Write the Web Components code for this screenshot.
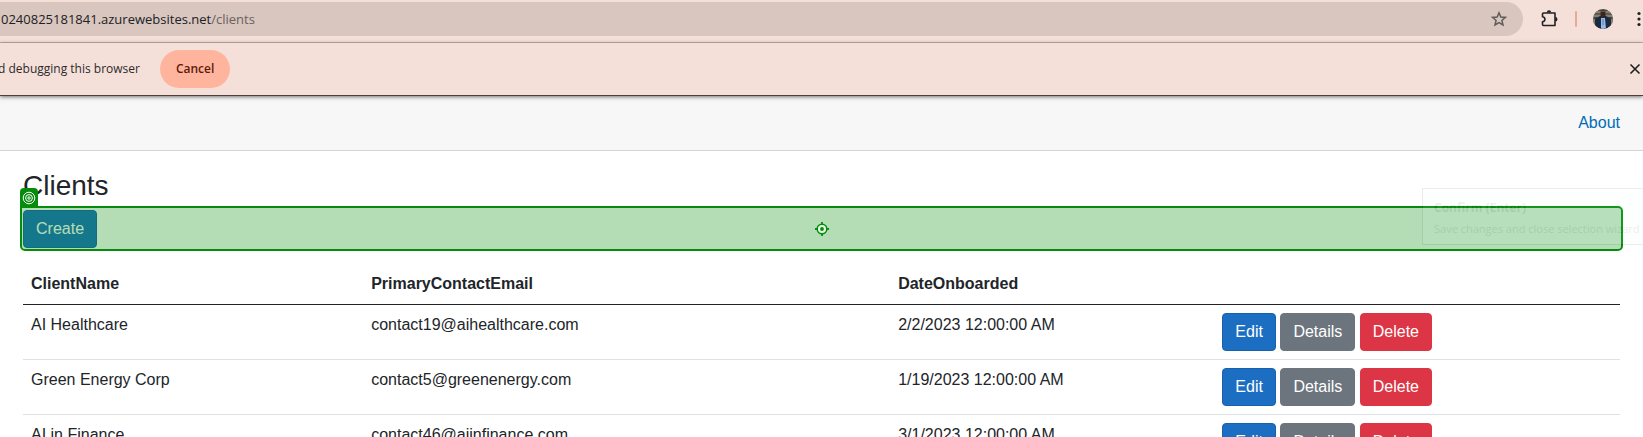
<!DOCTYPE html>
<html lang="en">
<head>
<meta charset="utf-8">
<title>Clients</title>
<style>
  html, body { margin: 0; height: 100%; }
  body { overflow: hidden; background: #fff; color: #212529; font: 16px/24px "Liberation Sans", Arial, sans-serif; }
</style>
</head>
<body>
<browser-toolbar><span slot="host">0240825181841.azurewebsites.net</span><span slot="path">/clients</span></browser-toolbar>
<info-bar>d debugging this browser<span slot="action">Cancel</span></info-bar>
<top-row><span>About</span></top-row>
<clients-page>
  <span slot="title">Clients</span>
  <selection-highlight slot="create"><action-button kind="primary">Create</action-button></selection-highlight>
  <client-table slot="table"></client-table>
</clients-page>
<script>
const define = (name, html, setup) => customElements.define(name, class extends HTMLElement {
  constructor() {
    super();
    this.attachShadow({ mode: 'open' }).innerHTML = html;
    if (setup) setup(this.shadowRoot, this);
  }
});

define('browser-toolbar', `
<style>
  :host { display: flex; align-items: center; gap: 16px; height: 38px; padding: 0 2px 4px 0; background: #f5e0d9; border-bottom: 1px solid #c9b0a9; font: 13px/20px "Open Sans", "Noto Sans", sans-serif; }
  .omnibox { flex: 1; display: flex; align-items: center; height: 34px; border-radius: 0 17px 17px 0; background: #d8c6bf; color: #202124; }
  .url { flex: 1; outline: 0; padding-left: 1px; }
  .path { color: #6a615e; }
  button { display: flex; border: 0; padding: 0; background: none; color: #202124; }
  .star { margin-right: 14px; color: #5f5b5a; }
  .line { width: 2px; height: 16px; background: #e8a996; border-radius: 1px; }
  .menu { margin-left: 8px; }
</style>
<div class="omnibox">
  <div class="url" role="textbox" aria-label="Address" contenteditable="true" spellcheck="false"><slot name="host"></slot><span class="path"><slot name="path"></slot></span></div>
  <button class="star" aria-label="Bookmark"><svg width="20" height="20" viewBox="0 0 20 20" fill="none" stroke="currentColor" stroke-width="1.5"><path d="M10 3.8 11.8 8l4.6.4-3.5 3 1.1 4.5-4-2.4-4 2.4 1.1-4.5-3.5-3L8.2 8z"/></svg></button>
</div>
<button aria-label="Extensions"><svg width="20" height="20" viewBox="0 0 20 20"><path d="M4.500 4H16v12.500H4.500a1 1 0 0 1-1-1v-2.700c3.200-.6 3.200-4.500 0-5.100V5a1 1 0 0 1 1-1z" fill="none" stroke="currentColor" stroke-width="1.6" stroke-linejoin="round"/><path d="M7.800 3.500a2.200 2.200 0 0 1 4.400 0zM16.300 8v4.400a2.200 2.200 0 0 0 0-4.400z" fill="currentColor"/></svg></button>
<span class="line"></span>
<button aria-label="Profile"><svg width="20" height="20" viewBox="0 0 20 20"><defs><clipPath id="c"><circle cx="10" cy="10" r="10"/></clipPath></defs><g clip-path="url(#c)"><path fill="#3c4850" d="M0 0h20v20H0z"/><path d="M0 3h20M0 7h20" stroke="#b68b60" stroke-width="1.500"/><path d="M0 5h20" stroke="#607786"/><path fill="#182b40" d="M2 20V10l5-3h6l5 3v10z"/><path fill="#98b8e8" d="M8 20V9h4l1 11z"/><path fill="#5f7fae" d="M9.500 10h1v6h-1z"/><path fill="#3a261e" d="M7.500 2.500h5v5L10 9 7.500 7.500z"/><path fill="#9a7b64" d="M0 10h2v7H0zM18 10h2v7h-2z"/></g></svg></button>
<button class="menu" aria-label="Menu"><svg width="4" height="16" viewBox="0 0 4 16" fill="currentColor"><circle cx="2" cy="2.500" r="1.600"/><circle cx="2" cy="8" r="1.600"/><circle cx="2" cy="13.500" r="1.600"/></svg></button>
`);

define('info-bar', `
<style>
  :host { display: flex; align-items: center; height: 52px; padding-right: 2px; background: #f5e0d9; color: #2b2b2b; border-bottom: 1px solid #50403b; box-shadow: 0 1px 4px #0008; position: relative; font: 12px/20px "Open Sans", "Noto Sans", sans-serif; }
  .text { margin-left: -2px; }
  .cancel { margin-left: 20px; height: 38px; padding: 0 16px; border: 0; border-radius: 19px; background: #ffb59d; color: #5c1a08; font: inherit; font-weight: 600; }
  .close { display: flex; margin-left: auto; padding: 0; border: 0; background: none; color: #202124; }
</style>
<span class="text"><slot></slot></span>
<button class="cancel"><slot name="action"></slot></button>
<button class="close" aria-label="Close"><svg width="12" height="12" viewBox="0 0 12 12" stroke="currentColor" stroke-width="1.600"><path d="m1.500 1.500 9 9m0-9-9 9"/></svg></button>
`);

define('top-row', `
<style>
  :host { display: flex; align-items: center; justify-content: flex-end; height: 54px; padding-right: 23px; background: #f7f7f7; border-bottom: 1px solid #d6d5d5; }
  a { color: #006bb7; text-decoration: none; }
</style>
<a href="#about"><slot></slot></a>`);

define('action-button', `
<style>
  :host { display: inline-block; vertical-align: middle; --fill: #1b6ec2; --edge: #1861ac; }
  :host([kind="secondary"]) { --fill: #6c757d; --edge: #6c757d; }
  :host([kind="danger"]) { --fill: #dc3545; --edge: #dc3545; }
  button { display: block; height: 38px; padding: 6px 12px; border: 1px solid var(--edge); border-radius: 4px; background: var(--fill); color: #fff; font: inherit; line-height: 24px; }
</style>
<button type="button"><slot></slot></button>`);

define('selection-highlight', `
<style>
  :host { display: flex; position: relative; }
  .frame { position: absolute; inset: -4px -3px -3px; display: grid; place-items: center; border: 2px solid #068c0d; border-radius: 0 5px 5px 5px; background: #068e0e4d; background-clip: padding-box; }
  .tag { position: absolute; left: -2px; top: -20px; display: grid; place-items: center; width: 18px; height: 19px; border-radius: 4px 4px 0 0; background: #068c0d; }
  .tip { position: absolute; right: -98px; width: 296px; top: -22px; height: 57px; box-sizing: border-box; padding: 8px 11px; border: 1px solid #000; background: #eff; opacity: .07; color: #000; white-space: nowrap; font: 11px/21px "Open Sans", "Noto Sans", sans-serif; }
  .tip strong { display: block; font-size: 12px; }
  svg { display: block; }
</style>
<slot></slot>
<div class="frame">
  <span class="tag"><svg width="14" height="14" viewBox="0 0 14 14" fill="none" stroke="#fff"><circle cx="7" cy="7" r="5.800"/><circle cx="7" cy="7" r="3.400"/><circle cx="7" cy="7" r="1.200"/></svg></span>
  <svg width="14" height="14" viewBox="0 0 14 14"><circle cx="7" cy="7" r="4.800" fill="#e4f5e4" stroke="#068c0d" stroke-width="1.500"/><path d="M7 0v2.500M7 11.500V14M0 7h2.500M11.500 7H14" stroke="#068c0d" stroke-width="1.800"/><circle cx="7" cy="7" r="1.900" fill="#068c0d"/></svg>
</div>
<div class="tip" role="tooltip"><strong>Confirm (Enter)</strong>Save changes and close selection wizard</div>`);

const clients = [
  ['AI Healthcare', 'contact19@aihealthcare.com', '2/2/2023 12:00:00 AM'],
  ['Green Energy Corp', 'contact5@greenenergy.com', '1/19/2023 12:00:00 AM'],
  ['AI in Finance', 'contact46@aiinfinance.com', '3/1/2023 12:00:00 AM']
];

define('client-table', `
<style>
  :host { display: block; }
  table { width: 100%; table-layout: fixed; border-collapse: separate; border-spacing: 0; }
  .name { width: 21.3%; } .mail { width: 33%; } .date { width: 20.3%; }
  th, td { padding: 8px; text-align: left; vertical-align: top; border-bottom: 1px solid #dee2e6; }
  th { border-color: #212529; }
</style>
<table>
  <colgroup><col class="name"><col class="mail"><col class="date"><col></colgroup>
  <thead><tr><th>ClientName</th><th>PrimaryContactEmail</th><th>DateOnboarded</th><th></th></tr></thead>
  <tbody></tbody>
</table>`, root => {
  root.querySelector('tbody').innerHTML = clients.map(row => `<tr>${row.map(v => `<td>${v}</td>`).join('')}
    <td><action-button kind="primary">Edit</action-button> <action-button kind="secondary">Details</action-button> <action-button kind="danger">Delete</action-button></td></tr>`).join('');
});

define('clients-page', `
<style>
  :host { display: block; padding: 17px 23px 0; }
  h1 { margin: 0 0 6px; font-size: 28px; line-height: 36px; font-weight: 400; }
  .create { margin-bottom: 16px; }
</style>
<h1><slot name="title"></slot></h1>
<div class="create"><slot name="create"></slot></div>
<slot name="table"></slot>`);
</script>
</body>
</html>
